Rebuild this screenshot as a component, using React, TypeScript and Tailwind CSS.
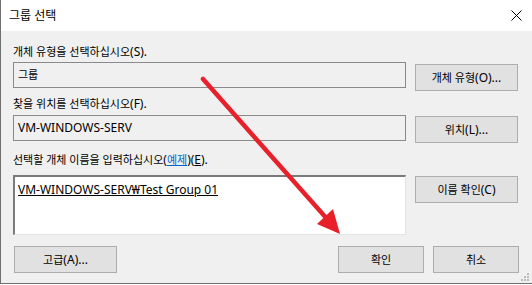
import type { ReactNode } from "react"

// hangul looks right at 11px, latin at 12px
function K({ children }: { children: ReactNode }) {
  return <span className="text-[11px]">{children}</span>
}

function Button({ children, className = "" }: { children: ReactNode; className?: string }) {
  return (
    <button
      className={`h-[27px] bg-[#e1e1e1] border border-[#adadad] text-black flex items-center justify-center leading-none ${className}`}
    >
      {children}
    </button>
  )
}

export default function App() {
  return (
    <div
      className="relative w-[532px] h-[285px] bg-white text-[12px] text-black overflow-hidden"
      style={{ fontFamily: '"Noto Sans", "Noto Sans CJK KR", sans-serif' }}
    >
      <div className="h-[284px] border-l border-b border-[#6f6f6f] flex flex-col">
        {/* title bar */}
        <div className="h-[31px] bg-white flex items-center justify-between pl-[8px] pr-[10px]">
          <span className="text-[12px]">그룹 선택</span>
          <svg width="11" height="11" viewBox="0 0 11 11">
            <path d="M0.5 0.5 L10.5 10.5 M10.5 0.5 L0.5 10.5" stroke="#000" strokeWidth="1" />
          </svg>
        </div>

        {/* body */}
        <div className="flex-1 bg-[#f0f0f0] px-[12px] flex flex-col">
          <div className="mt-[13px] h-[16px] leading-[16px]">
            <K>개체 유형을 선택하십시오</K>(S).
          </div>
          <div className="mt-[2px] flex items-start gap-[9px]">
            <div className="w-[393px] h-[26px] border border-[#8a8a8a] bg-[#f0f0f0] flex items-center pl-[4px]">
              <K>그룹</K>
            </div>
            <Button className="w-[103px] mt-[2px]">
              <K>개체 유형</K>(O)...
            </Button>
          </div>

          <div className="mt-[5px] h-[16px] leading-[16px]">
            <K>찾을 위치를 선택하십시오</K>(F).
          </div>
          <div className="mt-[3px] flex items-start gap-[9px]">
            <div className="w-[393px] h-[26px] border border-[#8a8a8a] bg-[#f0f0f0] flex items-center pl-[4px]">
              VM-WINDOWS-SERV
            </div>
            <Button className="w-[103px] mt-[1px]">
              <K>위치</K>(L)...
            </Button>
          </div>

          <div className="mt-[9px] h-[16px] leading-[16px]">
            <K>선택할 개체 이름을 입력하십시오</K>(
            <span className="text-[#0066cc] underline">
              <K>예제</K>
            </span>
            )(<span className="underline">E</span>).
          </div>
          <div className="mt-[7px] flex items-start gap-[9px]">
            <div className="w-[393px] h-[60px] border-t-2 border-l-2 border-t-[#7a7a7a] border-l-[#7a7a7a] border-b border-r border-b-[#e3e3e3] border-r-[#e3e3e3] bg-white pl-[3px] pt-[5px] leading-[16px]">
              <span className="underline">VM-WINDOWS-SERV₩Test Group 01</span>
            </div>
            <Button className="w-[103px] mt-[1px]">
              <K>이름 확인</K>(C)
            </Button>
          </div>

          <div className="mt-[11px] flex items-start">
            <Button className="w-[103px] ml-[1px]">
              <K>고급</K>(A)...
            </Button>
            <div className="flex-1" />
            <div className="flex gap-[9px] mr-[1px]">
              <Button className="w-[86px]">
                <K>확인</K>
              </Button>
              <Button className="w-[86px]">
                <K>취소</K>
              </Button>
            </div>
          </div>
        </div>
      </div>

      {/* size grip */}
      <svg className="absolute right-[2px] bottom-[3px]" width="10" height="10" viewBox="0 0 10 10">
        <rect x="7" y="1" width="2" height="2" fill="#bcbcbc" />
        <rect x="4" y="4" width="2" height="2" fill="#bcbcbc" />
        <rect x="7" y="4" width="2" height="2" fill="#bcbcbc" />
        <rect x="1" y="7" width="2" height="2" fill="#bcbcbc" />
        <rect x="4" y="7" width="2" height="2" fill="#bcbcbc" />
        <rect x="7" y="7" width="2" height="2" fill="#bcbcbc" />
      </svg>

      {/* red annotation arrow */}
      <svg className="absolute left-0 top-0 pointer-events-none" width="532" height="285" viewBox="0 0 532 285">
        <line x1="203" y1="79" x2="328" y2="220" stroke="#e8202a" strokeWidth="4.5" strokeLinecap="round" />
        <polygon points="317,224 333,209 340,234" fill="#e8202a" />
      </svg>
    </div>
  )
}
